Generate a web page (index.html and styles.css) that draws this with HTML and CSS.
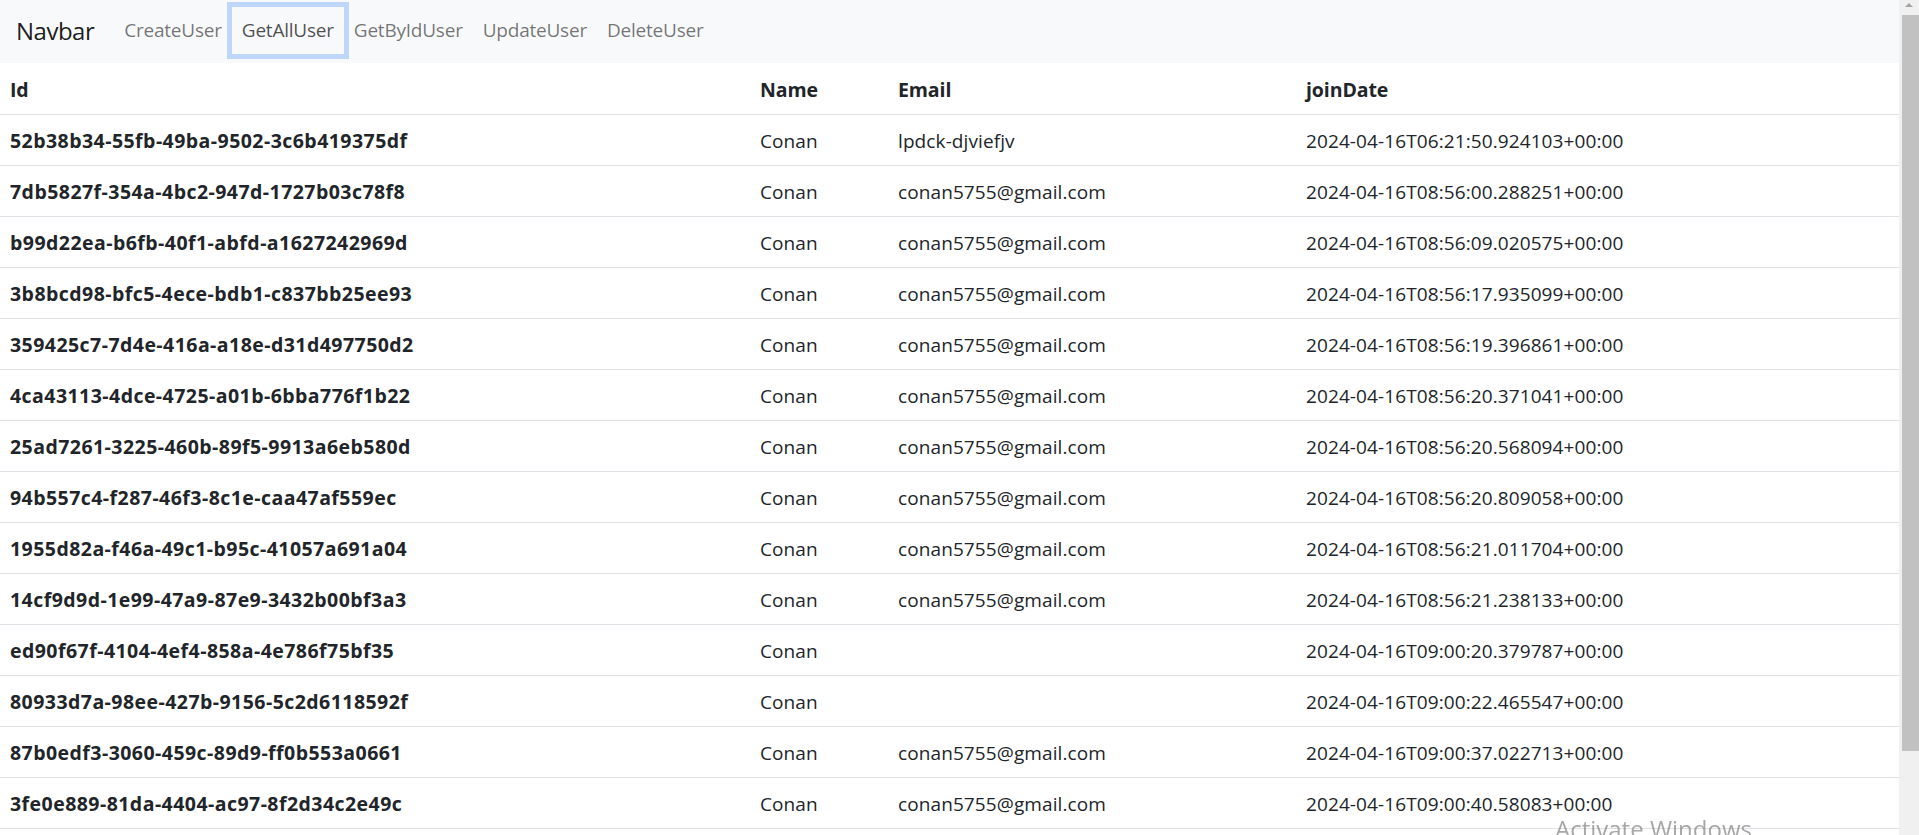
FILE: index.html
```html
<!DOCTYPE html>
<html lang="en">
<head>
<meta charset="utf-8">
<title>Users</title>
<link rel="stylesheet" href="styles.css">
</head>
<body>
<div class="page">
  <div class="main">
    <nav class="navbar">
      <a class="brand" href="#">Navbar</a>
      <ul class="nav">
        <li><a class="nav-link" href="#">CreateUser</a></li>
        <li><a class="nav-link is-focused" href="#">GetAllUser</a></li>
        <li><a class="nav-link" href="#">GetByIdUser</a></li>
        <li><a class="nav-link" href="#">UpdateUser</a></li>
        <li><a class="nav-link" href="#">DeleteUser</a></li>
      </ul>
    </nav>
    <table class="table">
      <colgroup>
        <col class="col-id">
        <col class="col-name">
        <col class="col-email">
        <col class="col-date">
      </colgroup>
      <thead>
        <tr><th>Id</th><th>Name</th><th>Email</th><th>joinDate</th></tr>
      </thead>
      <tbody>
        <tr><th>52b38b34-55fb-49ba-9502-3c6b419375df</th><td>Conan</td><td>lpdck-djviefjv</td><td>2024-04-16T06:21:50.924103+00:00</td></tr>
        <tr><th>7db5827f-354a-4bc2-947d-1727b03c78f8</th><td>Conan</td><td>conan5755@gmail.com</td><td>2024-04-16T08:56:00.288251+00:00</td></tr>
        <tr><th>b99d22ea-b6fb-40f1-abfd-a1627242969d</th><td>Conan</td><td>conan5755@gmail.com</td><td>2024-04-16T08:56:09.020575+00:00</td></tr>
        <tr><th>3b8bcd98-bfc5-4ece-bdb1-c837bb25ee93</th><td>Conan</td><td>conan5755@gmail.com</td><td>2024-04-16T08:56:17.935099+00:00</td></tr>
        <tr><th>359425c7-7d4e-416a-a18e-d31d497750d2</th><td>Conan</td><td>conan5755@gmail.com</td><td>2024-04-16T08:56:19.396861+00:00</td></tr>
        <tr><th>4ca43113-4dce-4725-a01b-6bba776f1b22</th><td>Conan</td><td>conan5755@gmail.com</td><td>2024-04-16T08:56:20.371041+00:00</td></tr>
        <tr><th>25ad7261-3225-460b-89f5-9913a6eb580d</th><td>Conan</td><td>conan5755@gmail.com</td><td>2024-04-16T08:56:20.568094+00:00</td></tr>
        <tr><th>94b557c4-f287-46f3-8c1e-caa47af559ec</th><td>Conan</td><td>conan5755@gmail.com</td><td>2024-04-16T08:56:20.809058+00:00</td></tr>
        <tr><th>1955d82a-f46a-49c1-b95c-41057a691a04</th><td>Conan</td><td>conan5755@gmail.com</td><td>2024-04-16T08:56:21.011704+00:00</td></tr>
        <tr><th>14cf9d9d-1e99-47a9-87e9-3432b00bf3a3</th><td>Conan</td><td>conan5755@gmail.com</td><td>2024-04-16T08:56:21.238133+00:00</td></tr>
        <tr><th>ed90f67f-4104-4ef4-858a-4e786f75bf35</th><td>Conan</td><td></td><td>2024-04-16T09:00:20.379787+00:00</td></tr>
        <tr><th>80933d7a-98ee-427b-9156-5c2d6118592f</th><td>Conan</td><td></td><td>2024-04-16T09:00:22.465547+00:00</td></tr>
        <tr><th>87b0edf3-3060-459c-89d9-ff0b553a0661</th><td>Conan</td><td>conan5755@gmail.com</td><td>2024-04-16T09:00:37.022713+00:00</td></tr>
        <tr><th>3fe0e889-81da-4404-ac97-8f2d34c2e49c</th><td>Conan</td><td>conan5755@gmail.com</td><td>2024-04-16T09:00:40.58083+00:00</td></tr>
      </tbody>
    </table>
  </div>
  <div class="scrollbar">
    <div class="scroll-up"><span class="arrow-up"></span></div>
    <div class="scroll-thumb"></div>
  </div>
</div>
<div class="watermark">Activate Windows</div>
</body>
</html>
```
FILE: styles.css
```css
* {
  box-sizing: border-box;
}

html, body {
  margin: 0;
  padding: 0;
  height: 100%;
  overflow: hidden;
  background: #fff;
}

body {
  font-family: "Open Sans", "Noto Sans", sans-serif;
  font-size: 19px;
  color: #212529;
}

.page {
  display: flex;
  height: 835px;
}

.main {
  flex: 1;
  min-width: 0;
  overflow: hidden;
}

/* Navbar */
.navbar {
  display: flex;
  align-items: flex-start;
  height: 63px;
  padding: 7px 15px 9px 16px;
  background: #f8f9fa;
}

.brand {
  display: block;
  height: 47px;
  line-height: 47px;
  margin-right: 20px;
  font-size: 24px;
  letter-spacing: -0.5px;
  color: rgba(0, 0, 0, 0.9);
  text-decoration: none;
}

.nav {
  display: flex;
  margin: 0;
  padding: 0;
  list-style: none;
}

.nav-link {
  display: block;
  height: 47px;
  line-height: 47px;
  padding: 0 10px;
  font-size: 19px;
  letter-spacing: -0.22px;
  color: rgba(0, 0, 0, 0.55);
  text-decoration: none;
}

.nav-link.is-focused {
  box-shadow: 0 0 0 5px rgba(13, 110, 253, 0.25);
  color: rgba(0, 0, 0, 0.7);
}

/* Table */
.table {
  width: 1899px;
  border-collapse: collapse;
  table-layout: fixed;
}

.col-id { width: 750px; }
.col-name { width: 138px; }
.col-email { width: 408px; }
.col-date { width: 603px; }

.table th,
.table td {
  padding: 11px 10px 9px;
  height: 51px;
  line-height: 30px;
  text-align: left;
  vertical-align: middle;
  border-bottom: 1px solid #dee2e6;
  white-space: nowrap;
  overflow: hidden;
}

.table th {
  font-weight: 700;
  font-size: 19.5px;
  letter-spacing: 0.45px;
}

.table thead th {
  padding-top: 12px;
  padding-bottom: 8px;
  letter-spacing: -0.1px;
}

.table td {
  letter-spacing: 0.1px;
}

/* Fake scrollbar */
.scrollbar {
  width: 20px;
  flex: none;
  background: #f0f0f0;
  display: flex;
  flex-direction: column;
  align-items: center;
}

.scroll-up {
  height: 15px;
  width: 20px;
  display: flex;
  justify-content: center;
  padding-top: 3px;
}

.arrow-up {
  width: 0;
  height: 0;
  border-left: 4.5px solid transparent;
  border-right: 4.5px solid transparent;
  border-bottom: 4.5px solid #a3a3a3;
}

.scroll-thumb {
  width: 17px;
  height: 736px;
  margin-left: 2px;
  background: #c1c1c1;
}

/* OS watermark overlay */
.watermark {
  position: fixed;
  left: 1555px;
  top: 812px;
  font-family: "Open Sans", "Noto Sans", sans-serif;
  font-size: 24px;
  color: rgba(120, 120, 120, 0.65);
  white-space: nowrap;
  pointer-events: none;
}
```
